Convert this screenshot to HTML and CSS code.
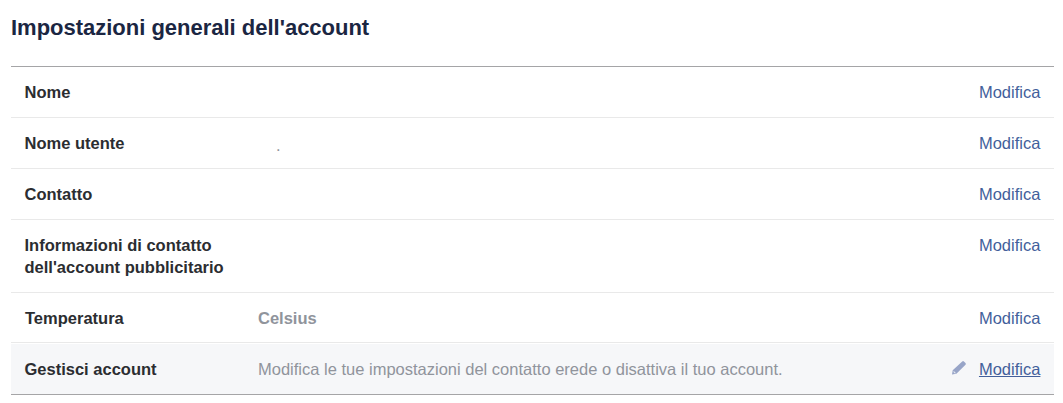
FILE: index.html
```html
<!DOCTYPE html>
<html lang="it">
<head>
<meta charset="utf-8">
<title>Impostazioni generali dell'account</title>
<link rel="stylesheet" href="styles.css">
</head>
<body>
<main class="settings">
  <h1 class="title">Impostazioni generali dell'account</h1>
  <ul class="list">
    <li class="row"><h2 class="label">Nome</h2><div class="value"></div><a class="edit">Modifica</a></li>
    <li class="row"><h2 class="label">Nome utente</h2><div class="value dot">.</div><a class="edit">Modifica</a></li>
    <li class="row"><h2 class="label">Contatto</h2><div class="value"></div><a class="edit">Modifica</a></li>
    <li class="row"><h2 class="label">Informazioni di contatto dell'account pubblicitario</h2><div class="value"></div><a class="edit">Modifica</a></li>
    <li class="row temp"><h2 class="label">Temperatura</h2><div class="value strong">Celsius</div><a class="edit">Modifica</a></li>
    <li class="row active"><h2 class="label">Gestisci account</h2><div class="value">Modifica le tue impostazioni del contatto erede o disattiva il tuo account.</div>
      <svg class="pencil" width="16" height="16" viewBox="0 0 16 16"><path d="M1 14.500l.7-4.300L11.200 1.500q.9-.8 1.700 0l1.600 1.600q.8.9 0 1.700L5.400 13.700z"/><path class="tip" d="M2.400 11.600l.5-.7 2 2-.7.500-1.200-.4z"/></svg>
      <a class="edit">Modifica</a></li>
  </ul>
</main>
</body>
</html>
```
FILE: styles.css
```css
body {
  margin: 0;
  background: #fff;
  font: 16.5px/22px "Liberation Sans", Arial, sans-serif;
  color: #2b2d31;
}
.settings { padding: 0 9px 0 11px; }
.title {
  margin: 0;
  padding-top: 14px;
  height: 52px;
  font-size: 22px;
  line-height: 27px;
  letter-spacing: -0.01px;
  color: #1b2642;
  white-space: nowrap;
}
.list {
  list-style: none;
  margin: 0;
  padding: 0;
  border-top: 1px solid #a5a5a7;
  border-bottom: 1px solid #a5a5a7;
}
.row {
  display: flex;
  align-items: flex-start;
  padding: 14px 13.6px 14px 13.5px;
  border-bottom: 1px solid #e9e9e9;
}
.label {
  flex: none;
  width: 233.5px;
  box-sizing: border-box;
  margin: 0;
  font-size: 16.5px;
  line-height: 22px;
}
.value { flex: 1; color: #90949c; white-space: nowrap; }
.strong { font-weight: bold; }
.dot { height: 20px; padding: 2px 0 0 18px; }
.edit { color: #435f9b; }
.temp { padding-left: 14px; padding-bottom: 13px; margin-bottom: 1px; }
.temp .label { width: 233px; }
.active { background: #f6f7f9; border-bottom: 0; }
.active .edit { text-decoration: underline; }
.pencil { margin: 2px 12px 0 0; fill: #98a5c8; }
.pencil .tip { fill: #e3e7f0; }
```
